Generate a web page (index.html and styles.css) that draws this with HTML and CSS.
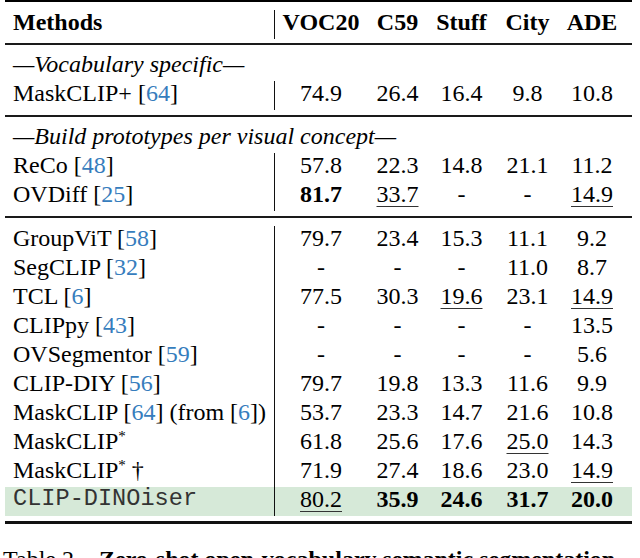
FILE: index.html
```html
<!DOCTYPE html>
<html>
<head>
<meta charset="utf-8">
<link rel="stylesheet" href="styles.css">
</head>
<body>
<div class="tbl">
  <div class="rule heavy"></div>
  <div class="sec head">
    <div class="row">
      <div class="m">Methods</div>
      <div class="n">VOC20</div>
      <div class="n">C59</div>
      <div class="n">Stuff</div>
      <div class="n">City</div>
      <div class="n">ADE</div>
    </div>
  </div>
  <div class="rule"></div>
  <div class="sec">
    <div class="row"><div class="group">—Vocabulary specific—</div></div>
    <div class="row">
      <div class="m">MaskCLIP+ [<span class="cite">64</span>]</div>
      <div class="n">74.9</div><div class="n">26.4</div><div class="n">16.4</div><div class="n">9.8</div><div class="n">10.8</div>
    </div>
  </div>
  <div class="rule"></div>
  <div class="sec">
    <div class="row"><div class="group">—Build prototypes per visual concept—</div></div>
    <div class="row">
      <div class="m">ReCo [<span class="cite">48</span>]</div>
      <div class="n">57.8</div><div class="n">22.3</div><div class="n">14.8</div><div class="n">21.1</div><div class="n">11.2</div>
    </div>
    <div class="row">
      <div class="m">OVDiff [<span class="cite">25</span>]</div>
      <div class="n"><b>81.7</b></div><div class="n"><u>33.7</u></div><div class="n">-</div><div class="n">-</div><div class="n"><u>14.9</u></div>
    </div>
  </div>
  <div class="rule"></div>
  <div class="sec last">
    <div class="row">
      <div class="m">GroupViT [<span class="cite">58</span>]</div>
      <div class="n">79.7</div><div class="n">23.4</div><div class="n">15.3</div><div class="n">11.1</div><div class="n">9.2</div>
    </div>
    <div class="row">
      <div class="m">SegCLIP [<span class="cite">32</span>]</div>
      <div class="n">-</div><div class="n">-</div><div class="n">-</div><div class="n">11.0</div><div class="n">8.7</div>
    </div>
    <div class="row">
      <div class="m">TCL [<span class="cite">6</span>]</div>
      <div class="n">77.5</div><div class="n">30.3</div><div class="n"><u>19.6</u></div><div class="n">23.1</div><div class="n"><u>14.9</u></div>
    </div>
    <div class="row">
      <div class="m">CLIPpy [<span class="cite">43</span>]</div>
      <div class="n">-</div><div class="n">-</div><div class="n">-</div><div class="n">-</div><div class="n">13.5</div>
    </div>
    <div class="row">
      <div class="m">OVSegmentor [<span class="cite">59</span>]</div>
      <div class="n">-</div><div class="n">-</div><div class="n">-</div><div class="n">-</div><div class="n">5.6</div>
    </div>
    <div class="row">
      <div class="m">CLIP-DIY [<span class="cite">56</span>]</div>
      <div class="n">79.7</div><div class="n">19.8</div><div class="n">13.3</div><div class="n">11.6</div><div class="n">9.9</div>
    </div>
    <div class="row">
      <div class="m">MaskCLIP [<span class="cite">64</span>] (from [<span class="cite">6</span>])</div>
      <div class="n">53.7</div><div class="n">23.3</div><div class="n">14.7</div><div class="n">21.6</div><div class="n">10.8</div>
    </div>
    <div class="row">
      <div class="m">MaskCLIP<sup class="ast">*</sup></div>
      <div class="n">61.8</div><div class="n">25.6</div><div class="n">17.6</div><div class="n"><u>25.0</u></div><div class="n">14.3</div>
    </div>
    <div class="row">
      <div class="m">MaskCLIP<sup class="ast">*</sup> †</div>
      <div class="n">71.9</div><div class="n">27.4</div><div class="n">18.6</div><div class="n">23.0</div><div class="n"><u>14.9</u></div>
    </div>
    <div class="row ours">
      <div class="m mono">CLIP-DINOiser</div>
      <div class="n"><u>80.2</u></div><div class="n"><b>35.9</b></div><div class="n"><b>24.6</b></div><div class="n"><b>31.7</b></div><div class="n"><b>20.0</b></div>
    </div>
  </div>
  <div class="rule heavy bottom"></div>
</div>
<p class="caption"><span class="lbl">Table 2.</span><b>Zero-shot open-vocabulary semantic segmentation</b></p>
</body>
</html>
```
FILE: styles.css
```css
html, body {
  margin: 0;
  padding: 0;
  background: #fff;
}
body {
  width: 640px;
  height: 558px;
  overflow: hidden;
  font-family: "Liberation Serif", "Times New Roman", serif;
  font-size: 24px;
  color: #000;
}
.tbl {
  margin-left: 5px;
  width: 627px;
}
.rule {
  height: 2px;
  background: #1a1a1a;
}
.rule.heavy {
  background: #000;
}
.rule.bottom {
  height: 3px;
  background: #111;
}
.sec {
  padding: 7px 0 5px;
}
.sec.head {
  padding: 8px 0 4px;
}
.sec.last {
  padding: 8px 0 5px;
}
.row {
  display: grid;
  grid-template-columns: 270px 92px 61px 67px 65px 64px 8px;
  height: 29px;
}
.row > div {
  line-height: 24px;
  padding-bottom: 5px;
  white-space: nowrap;
}
.m {
  padding-left: 8px;
  border-right: 1px solid #111;
}
.n {
  text-align: center;
}
.head .m, .head .n {
  font-weight: bold;
}
.group {
  grid-column: 1 / -1;
  padding-left: 8px;
  font-style: italic;
}
.cite {
  color: #367dbd;
}
.ast {
  font-size: 15px;
  line-height: 0;
  vertical-align: 8px;
}
u {
  text-decoration: underline;
  text-decoration-thickness: 1px;
  text-underline-offset: 4px;
  text-decoration-color: #333;
}
.ours {
  background: #d6e9d8;
}
.mono {
  font-family: "Liberation Mono", "Courier New", monospace;
  color: #333;
  font-size: 23.6px;
}
.caption {
  margin: 21px 0 0 3px;
  line-height: 29px;
  white-space: nowrap;
}
.lbl {
  margin-right: 19px;
}
```
